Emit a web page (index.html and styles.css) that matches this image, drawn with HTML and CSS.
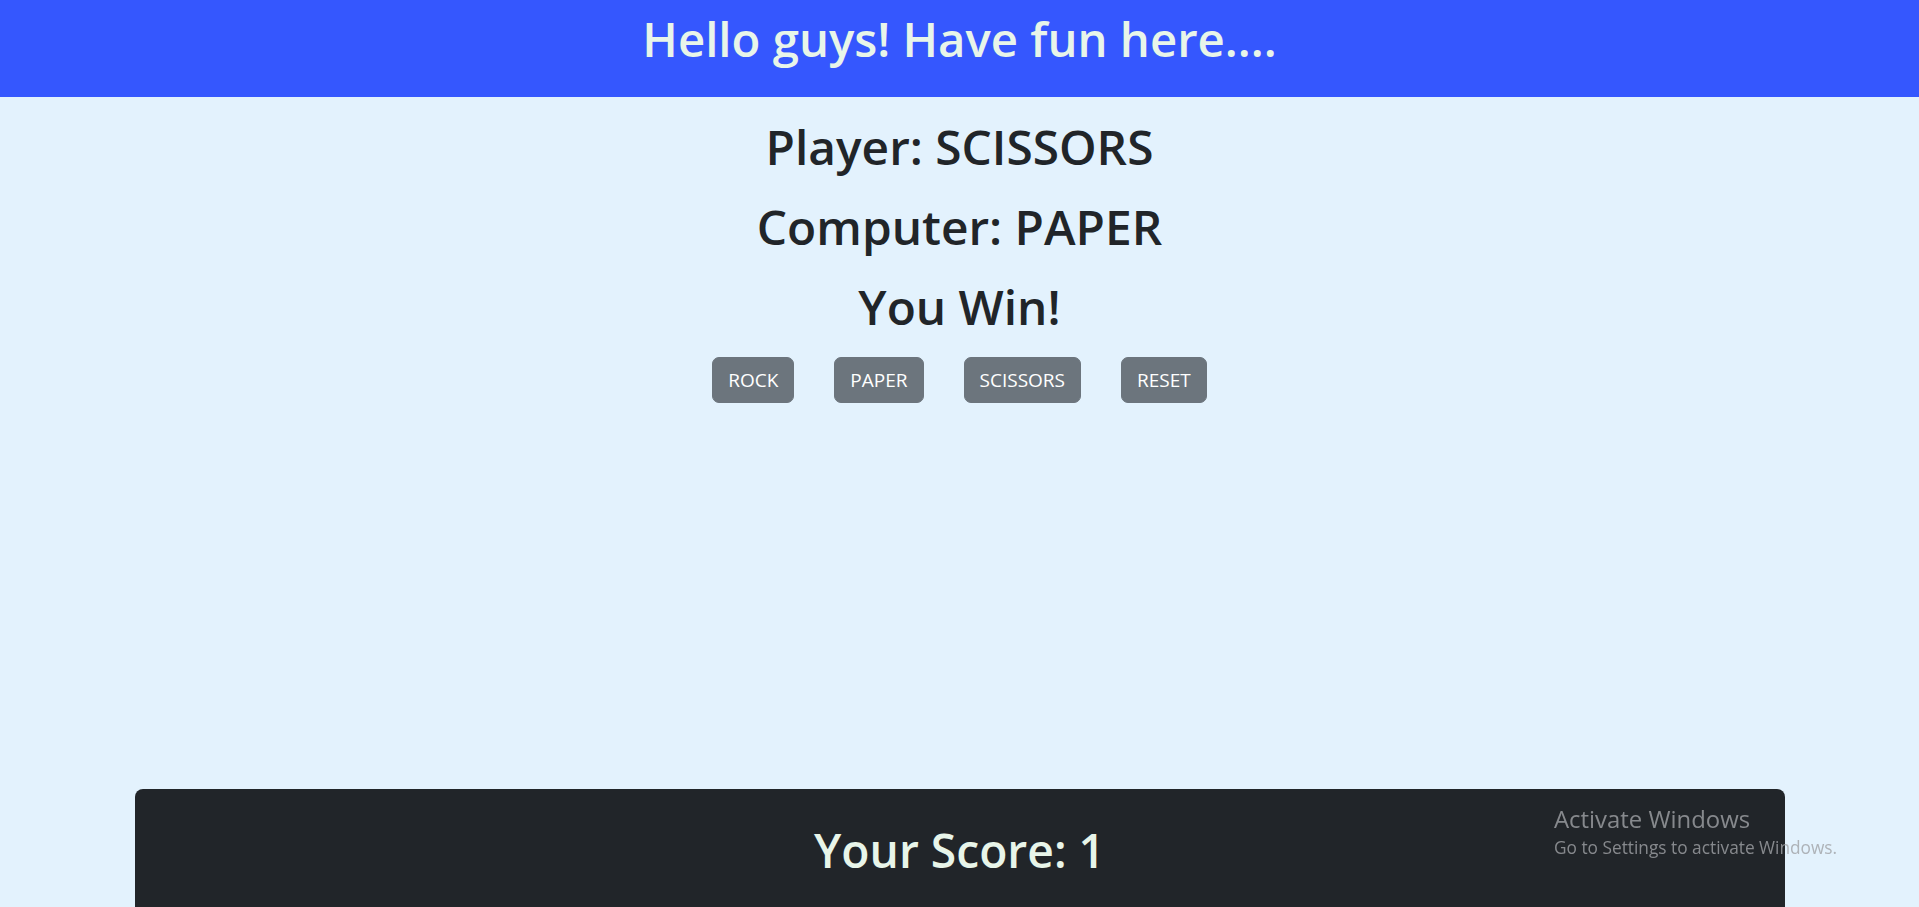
FILE: index.html
```html
<!DOCTYPE html>
<html lang="en">
<head>
<meta charset="utf-8">
<title>Rock Paper Scissors</title>
<link rel="stylesheet" href="styles.css">
</head>
<body>
<header class="topbar">
  <h1 class="title">Hello guys! Have fun here....</h1>
</header>
<main class="game">
  <h2 class="line">Player: SCISSORS</h2>
  <h2 class="line">Computer: PAPER</h2>
  <h2 class="line">You Win!</h2>
  <div class="controls">
    <button class="btn">ROCK</button>
    <button class="btn">PAPER</button>
    <button class="btn">SCISSORS</button>
    <button class="btn">RESET</button>
  </div>
</main>
<section class="score">
  <h2 class="score-text">Your Score: 1</h2>
</section>
<div class="watermark">
  <div class="wm-title">Activate Windows</div>
  <div class="wm-sub">Go to Settings to activate Windows.</div>
</div>
</body>
</html>
```
FILE: styles.css
```css
html, body {
  margin: 0;
  padding: 0;
}
body {
  background: #e3f2fd;
  font-family: "Open Sans", "Noto Sans", sans-serif;
  color: #212529;
  height: 907px;
  overflow: hidden;
}
.topbar {
  background: #3557fe;
  height: 97px;
  box-sizing: border-box;
  padding-top: 9px;
}
.title {
  margin: 0;
  text-align: center;
  color: #e8f5e9;
  font-size: 47.3px;
  line-height: 60px;
  font-weight: 600;
}
.game {
  display: flex;
  flex-direction: column;
  align-items: center;
  gap: 20px;
  padding-top: 20px;
}
.line {
  margin: 0;
  font-size: 47.8px;
  line-height: 60px;
  font-weight: 600;
}
.controls {
  display: flex;
  gap: 40px;
}
.btn {
  font-family: inherit;
  font-size: 19px;
  line-height: 30px;
  padding: 7px 15px;
  border: 1px solid #6c757d;
  border-radius: 7px;
  background: #6c757d;
  color: #fff;
}
.score {
  width: 1650px;
  height: 160px;
  margin: 386px auto 0;
  background: #212529;
  border-radius: 8px 8px 0 0;
  box-sizing: border-box;
  padding-top: 32px;
}
.score-text {
  margin: 0;
  text-align: center;
  color: #e8f5e9;
  font-size: 46.2px;
  line-height: 60px;
  font-weight: 600;
}
.watermark {
  position: fixed;
  left: 1554px;
  top: 804px;
  color: rgba(160, 162, 166, 0.8);
  font-family: "Open Sans", sans-serif;
}
.wm-title {
  font-size: 23.9px;
  line-height: 30px;
  font-weight: 400;
}
.wm-sub {
  margin-top: 3px;
  font-size: 17.3px;
  line-height: 22px;
}
```
